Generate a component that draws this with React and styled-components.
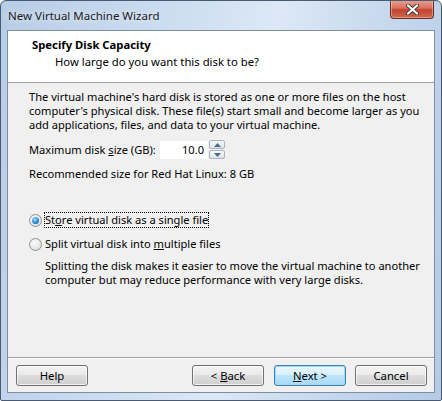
import React from "react";
import styled, { createGlobalStyle, css } from "styled-components";

const Global = createGlobalStyle`
  html, body { margin: 0; padding: 0; background: #fff; }
  body { font-family: "Noto Sans", "Open Sans", sans-serif; font-size: 11.1px; }
`;

const Window = styled.div`
  width: 442px;
  height: 401px;
  box-sizing: border-box;
  display: flex;
  flex-direction: column;
  border: 1px solid #4a5a70;
  border-radius: 6px 6px 2px 2px;
  background: linear-gradient(100deg, #b7cde6 0%, #c9dbef 30%, #dce8f5 55%, #c3d6ec 80%, #b4cbe5 100%);
  overflow: hidden;
`;

const TitleBar = styled.div`
  height: 29px;
  display: flex;
  align-items: flex-start;
  justify-content: space-between;
  padding-left: 7px;
`;

const TitleText = styled.div`
  font-size: 11.5px;
  color: #1a1a1a;
  margin-top: 7px;
  text-shadow: 0 0 6px rgba(255,255,255,0.9);
`;

const CloseBtn = styled.div`
  width: 44px;
  height: 19px;
  margin-right: 7px;
  margin-top: -1px;
  box-sizing: border-box;
  border: 1px solid #6b2a22;
  border-top: none;
  border-radius: 0 0 4px 4px;
  background: linear-gradient(#e8a493 0%, #d6705c 45%, #c3432d 55%, #cf6a4e 100%);
  display: flex;
  align-items: center;
  justify-content: center;
  box-shadow: inset 0 0 0 1px rgba(255,255,255,0.35);
`;

const Client = styled.div`
  flex: 1;
  margin: 0 6px;
  border: 1px solid #7d8ea4;
  background: #f0f0f0;
  display: flex;
  flex-direction: column;
`;

const Header = styled.div`
  height: 52px;
  background: #fff;
  border-bottom: 1px solid #a0a0a0;
  padding: 6px 0 0 24px;
  box-sizing: border-box;
  font-size: 11.3px;
`;

const HeaderTitle = styled.div`
  font-weight: bold;
  color: #000;
  line-height: 15px;
`;

const HeaderSub = styled.div`
  color: #000;
  line-height: 15px;
  padding-left: 23px;
  margin-top: 2px;
`;

const Body = styled.div`
  flex: 1;
  padding: 7px 21px 0 21px;
  display: flex;
  flex-direction: column;
`;

const Para = styled.p`
  margin: 0;
  line-height: 14px;
  color: #000;
  white-space: nowrap;
  ${(p) => p.$indent && css`padding-left: 16px;`}
  ${(p) => p.$top && css`margin-top: ${p.$top}px;`}
`;

const SizeRow = styled.div`
  display: flex;
  align-items: center;
  margin-top: 7px;
  height: 21px;
`;

const Label = styled.span`
  color: #000;
  width: 130px;
  white-space: nowrap;
`;

const NumBox = styled.div`
  width: 49px;
  height: 20px;
  box-sizing: border-box;
  background: #fff;
  border: 1px solid #f0f0f0;
  border-right: none;
  text-align: right;
  padding-right: 4px;
  line-height: 18px;
  color: #000;
`;

const Spinner = styled.div`
  display: flex;
  flex-direction: column;
  gap: 1px;
  margin-left: 1px;
`;

const SpinBtn = styled.div`
  width: 16px;
  height: 9px;
  box-sizing: border-box;
  border: 1px solid #a9b3bf;
  border-radius: 2px;
  background: linear-gradient(#f6f8fa, #dde3ea);
  display: flex;
  align-items: center;
  justify-content: center;
`;

const RadioRow = styled.div`
  display: flex;
  align-items: center;
  gap: 2px;
  height: 16px;
  margin-top: ${(p) => p.$top}px;
`;

const RadioCircle = styled.span`
  width: 13px;
  height: 13px;
  border-radius: 50%;
  box-sizing: border-box;
  border: 1px solid #8e8f8f;
  background: radial-gradient(circle at 40% 35%, #fdfdfd 0%, #e6e6e6 60%, #d2d2d2 100%);
  display: flex;
  align-items: center;
  justify-content: center;
  flex: none;
  &::after {
    content: "";
    display: ${(p) => (p.$checked ? "block" : "none")};
    width: 7px;
    height: 7px;
    border-radius: 50%;
    background: radial-gradient(circle at 40% 35%, #9fe0ff 0%, #2b8ad8 55%, #0a4f98 100%);
  }
`;

const RadioLabel = styled.span`
  color: #000;
  line-height: 14px;
  padding: 0;
  border: 1px dotted ${(p) => (p.$focus ? "#000" : "transparent")};
`;

const Footer = styled.div`
  border-top: 1px solid #a0a0a0;
  box-shadow: inset 0 1px 0 #fff;
  height: 35px;
  box-sizing: border-box;
  display: flex;
  align-items: center;
  padding: 0 7px 0 8px;
  font-size: 11.3px;
`;

const Spacer = styled.div`
  flex: 1;
`;

const Button = styled.div`
  width: 72px;
  height: 21px;
  box-sizing: border-box;
  border: 1px solid #707070;
  border-radius: 3px;
  background: linear-gradient(#f2f2f2 0%, #ebebeb 45%, #dddddd 50%, #cfcfcf 100%);
  box-shadow: inset 0 0 0 1px rgba(255,255,255,0.7);
  color: #000;
  display: flex;
  align-items: center;
  justify-content: center;
  white-space: pre;
  margin-left: ${(p) => p.$ml || 0}px;
  ${(p) =>
    p.$default &&
    css`
      border-color: #3c7fb1;
      background: linear-gradient(#eaf6fd 0%, #d9f0fc 45%, #bee6fd 50%, #a7d9f5 100%);
      box-shadow: inset 0 0 0 1px #9fdcfa;
    `}
`;

const U = styled.span`
  text-decoration: underline;
`;

const Tri = ({ up }) => (
  <svg width="7" height="4" viewBox="0 0 7 4">
    <path d={up ? "M0 4 L3.5 0 L7 4 Z" : "M0 0 L3.5 4 L7 0 Z"} fill="#4a6a8a" />
  </svg>
);

export default function App() {
  return (
    <>
      <Global />
      <Window>
        <TitleBar>
          <TitleText>New Virtual Machine Wizard</TitleText>
          <CloseBtn>
            <svg width="13" height="11" viewBox="0 0 13 11">
              <path d="M2 1.5 L11 9.5 M11 1.5 L2 9.5" stroke="#3b3b3b" strokeWidth="4" strokeLinecap="round" />
              <path d="M2 1.5 L11 9.5 M11 1.5 L2 9.5" stroke="#fff" strokeWidth="2.2" strokeLinecap="round" />
            </svg>
          </CloseBtn>
        </TitleBar>
        <Client>
          <Header>
            <HeaderTitle>Specify Disk Capacity</HeaderTitle>
            <HeaderSub>How large do you want this disk to be?</HeaderSub>
          </Header>
          <Body>
            <Para>
              The virtual machine's hard disk is stored as one or more files on the host
              <br />
              computer's physical disk. These file(s) start small and become larger as you
              <br />
              add applications, files, and data to your virtual machine.
            </Para>
            <SizeRow>
              <Label>
                Maximum disk <U>s</U>ize (GB):
              </Label>
              <NumBox>10.0</NumBox>
              <Spinner>
                <SpinBtn><Tri up /></SpinBtn>
                <SpinBtn><Tri /></SpinBtn>
              </Spinner>
            </SizeRow>
            <Para $top={7}>Recommended size for Red Hat Linux: 8 GB</Para>
            <RadioRow $top={31}>
              <RadioCircle $checked />
              <RadioLabel $focus>
                St<U>o</U>re virtual disk as a single file
              </RadioLabel>
            </RadioRow>
            <RadioRow $top={8}>
              <RadioCircle />
              <RadioLabel>
                Split virtual disk into <U>m</U>ultiple files
              </RadioLabel>
            </RadioRow>
            <Para $indent $top={7}>
              Splitting the disk makes it easier to move the virtual machine to another
              <br />
              computer but may reduce performance with very large disks.
            </Para>
          </Body>
          <Footer>
            <Button>Help</Button>
            <Spacer />
            <Button>
              {"< "}
              <U>B</U>ack
            </Button>
            <Button $default $ml={10}>
              <U>N</U>
              {"ext >"}
            </Button>
            <Button $ml={9}>Cancel</Button>
          </Footer>
        </Client>
        <div style={{ height: 7 }} />
      </Window>
    </>
  );
}
